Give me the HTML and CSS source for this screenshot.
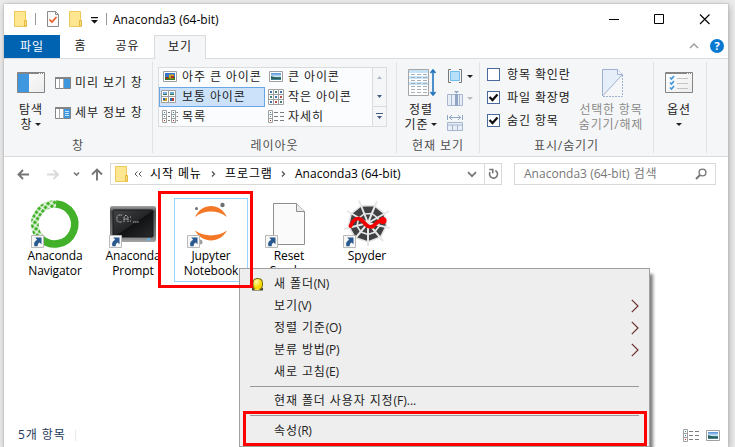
FILE: index.html
```html
<!DOCTYPE html>
<html lang="ko">
<head>
<meta charset="utf-8">
<title>Anaconda3 (64-bit)</title>
<link rel="stylesheet" href="styles.css">
</head>
<body>
<svg class="defs" width="0" height="0" aria-hidden="true">
  <defs>
    <linearGradient id="sky" x1="0" y1="0" x2="0" y2="1"><stop offset="0" stop-color="#4f8fd8"/><stop offset=".5" stop-color="#cfe6f7"/><stop offset=".6" stop-color="#3d7b71"/><stop offset="1" stop-color="#4d80a5"/></linearGradient>
    <linearGradient id="cmd" x1="0" y1="0" x2="1" y2="1"><stop offset="0" stop-color="#414243"/><stop offset=".5" stop-color="#252627"/><stop offset=".52" stop-color="#111213"/><stop offset="1" stop-color="#292a2b"/></linearGradient>
    <linearGradient id="frame" x1="0" y1="0" x2="0" y2="1"><stop offset="0" stop-color="#a7a7a7"/><stop offset=".15" stop-color="#4f5051"/><stop offset=".82" stop-color="#77797b"/><stop offset="1" stop-color="#a4a6a8"/></linearGradient>
    <linearGradient id="pane" x1="0" y1="0" x2="1" y2="1"><stop offset="0" stop-color="#fff"/><stop offset="1" stop-color="#ececec"/></linearGradient>
    <radialGradient id="egg" cx=".35" cy=".3"><stop offset="0" stop-color="#fffbb0"/><stop offset="1" stop-color="#f4d800"/></radialGradient>
    <pattern id="scales" width="4.600" height="4.600" patternUnits="userSpaceOnUse" patternTransform="rotate(35)"><path d="M.6.6h3.400v3.400H.6z" fill="#43b02a"/></pattern>
    <symbol id="folder" viewBox="0 0 13 16"><path d="M.5.5h11v9h1v6h-12z" fill="#ffe690" stroke="#edc95c"/><path d="M10.500 15V9.500h2V15z" fill="#fbe08a" stroke="#e5b93d"/></symbol>
    <symbol id="list" viewBox="0 0 16 13"><path d="M.5.5h4v12h-4zM.5 4.500h4M.5 8.500h4" fill="#fff" stroke="#a0a0a0"/><path d="M2 2h1v1H2zM2 6h1v1H2z" fill="#3c82a8"/><path d="M2 10h1v1H2z" fill="#c22"/><path d="M6 2.500h4m2 0h4M6 6.500h4m2 0h4M6 10.500h4m2 0h4" stroke="#7d7d7d"/></symbol>
    <symbol id="photo" viewBox="0 0 14 11"><path d="M.5.5h13v10H.5z" fill="#fff" stroke="#a0a0a0"/><path d="M2 2h10v7H2z" fill="url(#sky)"/><path d="M2 5l3 1 3 1h4v1H2z" fill="#28635b"/></symbol>
    <symbol id="shortcut" viewBox="0 0 13 13"><path d="M.5.5h12v12H.5z" fill="#f7f7f7" stroke="#b9b9b9"/><path d="M4.300 2.500H10.500v6.700L8.700 7.400C6.900 8.200 6.700 9.300 6.700 11.200H3.400C2.500 8.200 3.600 6.200 6.100 4.800z" fill="#29598f"/></symbol>
    <symbol id="chev" viewBox="0 0 8 14"><path d="M.8.8L7 7 .8 13.200" fill="none" stroke="#6b3030" stroke-width="1.200"/></symbol>
  </defs>
</svg>
<div class="window">
  <header class="titlebar">
    <svg class="folder" width="13" height="16"><use href="#folder"/></svg>
    <i class="vline v1"></i>
    <svg class="props" width="12" height="16" viewBox="0 0 12 16"><path d="M.5.5h8l3 3v12H.5z" fill="#fafafa" stroke="#8b8b8b"/><path d="M8.500.5v3h3" fill="none" stroke="#8b8b8b"/><path d="M2.500 8.500l2.500 2.500 4.500-5" fill="none" stroke="#ee5a24" stroke-width="1.700"/></svg>
    <svg class="folder f2" width="13" height="16"><use href="#folder"/></svg>
    <svg class="qat" width="7" height="7" viewBox="0 0 7 7"><path d="M0 0h7v1.200H0zM0 3h7L3.500 6.500z" fill="#111"/></svg>
    <i class="vline v2"></i>
    <span class="title">Anaconda3 (64-bit)</span>
    <svg class="controls" width="102" height="11" viewBox="0 0 102 11"><path d="M0 5.500h10M45.500.5h9v9h-9z" fill="none" stroke="#000"/><path d="M91 .5l9.500 9.500M100.500.5L91 10" fill="none" stroke="#000" stroke-width="1.100"/></svg>
  </header>
  <nav class="tabs">
    <span class="tab file">파일</span><span class="tab home">홈</span><span class="tab share">공유</span><span class="tab view">보기</span>
    <svg class="collapse" width="10" height="6" viewBox="0 0 10 6"><path d="M1 5l4-4 4 4" fill="none" stroke="#999" stroke-width="1.400"/></svg>
    <span class="help">?</span>
  </nav>

  <section class="ribbon">
    <div class="group g-pane">
      <div class="body">
        <div class="big nav">
          <svg width="28" height="21" viewBox="0 0 28 21"><path d="M.5.5h27v20H.5z" fill="url(#pane)" stroke="#858585"/><path d="M1 1h26v1H1z" fill="#858585"/><path d="M22 1h1v1h-1zm2 0h1v1h-1zm2 0h1v1h-1z" fill="#fff"/><path d="M1 2h11v18H1z" fill="#3f97df"/></svg>
          <span class="l1">탐색</span><span class="l2">창<b class="tri"></b></span>
        </div>
        <div class="stack">
          <div class="cmd"><svg width="16" height="12" viewBox="0 0 16 12"><path d="M.5.5h15v11H.5z" fill="#fff" stroke="#858585"/><path d="M0 0h16v2H0z" fill="#858585"/><path d="M4.500 2v9.500M8.500 2v9.500" stroke="#aaa"/><path d="M9 2h6v9H9z" fill="#3f97df"/></svg><span>미리 보기 창</span></div>
          <div class="cmd"><svg width="16" height="12" viewBox="0 0 16 12"><path d="M.5.5h15v11H.5z" fill="#fff" stroke="#858585"/><path d="M0 0h16v2H0z" fill="#858585"/><path d="M4.500 2v9.500M8.500 2v9.500" stroke="#aaa"/><path d="M9 2h6v9H9z" fill="#3f97df"/><path d="M10 4.500h4M10 6.500h4M10 8.500h4" stroke="#c4e4fa"/></svg><span>세부 정보 창</span></div>
        </div>
      </div>
      <div class="caption">창</div>
    </div>

    <div class="group g-layout">
      <div class="body">
        <div class="gallery">
          <div class="choice"><svg width="14" height="11" viewBox="0 0 14 11"><path d="M.5.5h13v10H.5z" fill="#fff" stroke="#a0a0a0"/><path d="M2 2h10v7H2z" fill="#3474cb"/><path d="M2 6h10v3H2z" fill="#39752b"/><path d="M6 3.500h5v4H6z" fill="#d5a717"/><path d="M8 5h3v2H8zM3 6h2v2H3z" fill="#a52828"/></svg><span>아주 큰 아이콘</span></div>
          <div class="choice"><svg width="14" height="11"><use href="#photo"/></svg><span>큰 아이콘</span></div>
          <div class="choice selected"><svg width="15" height="13" viewBox="0 0 15 13"><path d="M.5.5h14v12H.5zM7.500.5v12M.5 6.500h14" fill="#fff" stroke="#a0a0a0"/><path d="M2 2h4v3H2z" fill="#75ace2"/><path d="M9 2h4v3H9z" fill="#66aeca"/><path d="M2 4h4v1H2zM9 4h4v1H9z" fill="#35785e"/><path d="M2 8h4v3H2z" fill="#c99c24"/><path d="M2 8h2v2H2zM9 8h2v3H9z" fill="#306aaf"/><path d="M11 8h2v3h-2z" fill="#b14033"/></svg><span>보통 아이콘</span></div>
          <div class="choice"><svg class="nine" width="16" height="16" viewBox="0 0 16 16"><path d="M.5.5h15v15H.5zM5.500.5v15M10.500.5v15M.5 5.500h15M.5 10.500h15" fill="#fff" stroke="#a0a0a0"/><path d="M2 2h2v2H2zM12 2h2v2h-2zM7 7h2v2H7zM2 12h2v2H2z" fill="#3973a8"/><path d="M7 2h2v2H7zM2 7h2v2H2zM12 12h2v2h-2z" fill="#3c8470"/><path d="M12 7h2v2h-2zM7 12h2v2H7z" fill="#b44f3f"/></svg><span>작은 아이콘</span></div>
          <div class="choice"><svg width="16" height="13" viewBox="0 0 16 13"><path d="M.5.5h4v12h-4zM.5 4.500h4M.5 8.500h4M9.500.5h4v12h-4zM9.500 4.500h4M9.500 8.500h4" fill="#fff" stroke="#a0a0a0"/><path d="M2 2h1v1H2zM2 6h1v1H2zM11 2h1v1h-1zM11 6h1v1h-1z" fill="#3c82a8"/><path d="M2 10h1v1H2zM11 10h1v1h-1z" fill="#c22"/><path d="M6 2.500h2M6 6.500h2M6 10.500h2M14.500 2.500H16M14.500 6.500H16M14.500 10.500H16" stroke="#7d7d7d"/></svg><span>목록</span></div>
          <div class="choice"><svg width="16" height="13"><use href="#list"/></svg><span>자세히</span></div>
        </div>
        <div class="scroller">
          <span><svg width="5" height="3" viewBox="0 0 5 3"><path d="M0 3h5L2.500 0z" fill="#a9b5c7"/></svg></span>
          <span><svg width="5" height="3" viewBox="0 0 5 3"><path d="M0 0h5L2.500 3z" fill="#435a82"/></svg></span>
          <span><svg width="7" height="6" viewBox="0 0 7 6"><path d="M0 0h7v1H0zM1 3h5L3.500 6z" fill="#435a82"/></svg></span>
        </div>
      </div>
      <div class="caption">레이아웃</div>
    </div>

    <div class="group g-current">
      <div class="body">
        <div class="big sort">
          <svg width="28" height="28" viewBox="0 0 28 28"><path d="M.5.5h20v26H.5z" fill="#fff" stroke="#a5a5a5"/><path d="M1 1h19v3H1zM1 7h19v3H1zM1 13h19v3H1z" fill="#c5e2f7"/><path d="M3 5.500h4m2 0h4m2 0h4M3 8.500h4m2 0h4m2 0h4M3 11.500h4m2 0h4m2 0h4M3 14.500h4m2 0h4m2 0h4M3 17.500h4m2 0h4m2 0h4M3 20.500h4m2 0h4m2 0h4M3 23.500h4m2 0h4m2 0h4" stroke="#a9b0b5"/><path d="M25 1v25M22.500 4L25 1l2.500 3M22.500 23l2.500 3 2.500-3" fill="none" stroke="#2475bd" stroke-width="1.600"/></svg>
          <span class="l1">정렬</span><span class="l2">기준<b class="tri"></b></span>
        </div>
        <div class="minis">
          <div><svg width="16" height="14" viewBox="0 0 16 14"><path d="M4 .5H1.500v13H4M12 .5h2.500v13H12" fill="none" stroke="#777"/><path d="M3.500 2.500h9v9h-9z" fill="#b9e0fb" stroke="#71bdf0"/></svg><b class="tri"></b></div>
          <div class="off"><svg width="16" height="15" viewBox="0 0 16 15"><path d="M.5 3.500h15v11H.5zM4.500 3.500v11M12.500 3.500v11" fill="#e8eef8" stroke="#a7b6ce"/><path d="M8 3h3v12H8zM7 0h5L9.500 2.500z" fill="#8fa3c2"/></svg><b class="tri"></b></div>
          <div class="off"><svg width="16" height="17" viewBox="0 0 16 17"><path d="M.5 1v5M15.500 1v5M2 3.500h12M5 1L2.500 3.500 5 6M11 1l2.500 2.500L11 6" fill="none" stroke="#91a5c4"/><path d="M.5 8.500h15v8H.5zM5.500 11v5.500M10.500 11v5.500M.5 11h15" fill="#e8eef8" stroke="#a7b6ce"/></svg></div>
        </div>
      </div>
      <div class="caption">현재 보기</div>
    </div>

    <div class="group g-show">
      <div class="body">
        <div class="checks">
          <label><i class="box"></i>항목 확인란</label>
          <label><i class="box"><svg width="11" height="11" viewBox="0 0 11 11"><path d="M1.500 5l3 3L9.500 2.500" fill="none" stroke="#111" stroke-width="2.300"/></svg></i>파일 확장명</label>
          <label><i class="box"><svg width="11" height="11" viewBox="0 0 11 11"><path d="M1.500 5l3 3L9.500 2.500" fill="none" stroke="#111" stroke-width="2.300"/></svg></i>숨긴 항목</label>
        </div>
        <div class="big hide">
          <svg width="21" height="28" viewBox="0 0 21 28"><path d="M.5 27V.5h15l5 5L.5 27" fill="#e6eefa" stroke="#9fb1ce"/><path d="M15.500.5v5h5" fill="#f4f8fd" stroke="#9fb1ce"/><path d="M20.500 6v21.500H.5" fill="none" stroke="#9fb1ce" stroke-dasharray="2 1"/></svg>
          <span class="l1">선택한 항목</span><span class="l2">숨기기/해제</span>
        </div>
      </div>
      <div class="caption">표시/숨기기</div>
    </div>

    <div class="group g-opt">
      <div class="big nav">
        <svg width="28" height="21" viewBox="0 0 28 21"><path d="M.5.5h27v20H.5z" fill="url(#pane)" stroke="#858585"/><path d="M1 1h26v1H1z" fill="#858585"/><path d="M22 1h1v1h-1zm2 0h1v1h-1zm2 0h1v1h-1z" fill="#fff"/><path d="M5 5.500l1.500 1.500L9 4M5 10.500l1.500 1.500L9 9M5 15.500L6.500 17 9 14" fill="none" stroke="#3f97df" stroke-width="1.600"/><path d="M12 6.500h11M12 11.500h11M12 16.500h11" stroke="#c3c3c3"/></svg>
        <span class="l1">옵션</span><span class="l2"><b class="tri"></b></span>
      </div>
    </div>
  </section>

  <div class="addressbar">
    <svg class="history" width="86" height="13" viewBox="0 0 86 13"><g fill="none" stroke-width="1.900"><path d="M12 6.500H1.500M6 2L1.500 6.500 6 11" stroke="#757575"/><path d="M30 6.500h10.500M36.500 2L41 6.500 36.500 11" stroke="#dadada"/><path d="M57 4.500L59.500 7l2.500-2.500" stroke="#757575" stroke-width="1.600"/><path d="M80 12.500V2M75 6.500l5-5 5 5" stroke="#757575"/></g></svg>
    <div class="path">
      <svg width="13" height="16"><use href="#folder"/></svg>
      <svg class="dbl" width="8" height="6" viewBox="0 0 8 6"><path d="M3.500.5L1 3l2.500 2.500M7.500.5L5 3l2.500 2.500" fill="none" stroke="#555"/></svg>
      <span class="p1">시작 메뉴</span>
      <svg class="gt" width="5" height="6" viewBox="0 0 5 6"><path d="M1 .5L3.500 3 1 5.500" fill="none" stroke="#555" stroke-width="1.300"/></svg>
      <span class="p2">프로그램</span>
      <svg class="gt" width="5" height="6" viewBox="0 0 5 6"><path d="M1 .5L3.500 3 1 5.500" fill="none" stroke="#555" stroke-width="1.300"/></svg>
      <span class="lat">Anaconda3 (64-bit)</span>
      <svg class="drop" width="10" height="7" viewBox="0 0 10 7"><path d="M1 1.200l4 4 4-4" fill="none" stroke="#777" stroke-width="1.800"/></svg>
      <span class="refresh"><svg width="11" height="12" viewBox="0 0 11 12"><path d="M7.300 2.500A4 4 0 1 1 2 4.200M1.200 1.500h3.600v3.700" fill="none" stroke="#777" stroke-width="1.600"/></svg></span>
    </div>
    <div class="search"><span><span class="lat">Anaconda3 (64-bit)</span> 검색</span><svg width="12" height="12" viewBox="0 0 12 12"><circle cx="7.500" cy="4.500" r="3.400" fill="none" stroke="#777" stroke-width="1.400"/><path d="M5 7L1 11" stroke="#777" stroke-width="1.900"/></svg></div>
  </div>

  <main class="files">
    <div class="item">
      <svg class="art" width="48" height="48" viewBox="0 0 48 48"><path d="M25 4A20 20 0 1 1 10 38.500" fill="none" stroke="#43b02a" stroke-width="7.600"/><path d="M25 4A20 20 0 0 0 10 38.500" fill="none" stroke="url(#scales)" stroke-width="7.600"/><use href="#shortcut" x="0" y="35" width="13" height="13"/></svg>
      <span>Anaconda<br>Navigator</span>
    </div>
    <div class="item">
      <svg class="art" width="48" height="48" viewBox="0 0 48 48"><rect x="1" y="6" width="46" height="36" rx="2" fill="url(#frame)"/><rect x="4" y="10" width="40" height="27" rx="1" fill="url(#cmd)" stroke="#17191a"/><path d="M13 15h-3.500L8 16.500v4L9.500 22H13M15 22v-5l2-2 2 2v5M15 19h4M24 22h6M21 17h1M21 21h1" fill="none" stroke="#b9bcbe" stroke-width="1" stroke-dasharray="1.500 .6"/><path d="M38 38.500h3v2h-3z" fill="#5db7f4"/><use href="#shortcut" x="0" y="35" width="13" height="13"/></svg>
      <span>Anaconda<br>Prompt</span>
    </div>
    <div class="item current">
      <svg class="art" width="48" height="48" viewBox="0 0 48 48"><path d="M8 17C15 2.300 33 2.300 40 17 30 9.800 18 9.800 8 17zM8 30.500c7 13.200 25 13.200 32 0-10 6.500-22 6.500-32 0z" fill="#f37726"/><circle cx="35.500" cy="5" r="2.200" fill="#6e6f71"/><circle cx="9.500" cy="8.500" r="1.500" fill="#6e6f71"/><circle cx="13" cy="42" r="2.500" fill="#9e9e9e"/><use href="#shortcut" x="0" y="35" width="13" height="13"/></svg>
      <span>Jupyter<br>Notebook</span>
    </div>
    <div class="item">
      <svg class="art" width="48" height="48" viewBox="0 0 48 48"><path d="M8.500 3.500h23l8 8v33h-31z" fill="#fafafa" stroke="#8f8f8f"/><path d="M31.500 3.500v8h8" fill="#eaeaea" stroke="#8f8f8f"/><use href="#shortcut" x="0" y="35" width="13" height="13"/></svg>
      <span>Reset<br>Spyder</span>
    </div>
    <div class="item">
      <svg class="art" width="48" height="48" viewBox="0 0 48 48"><path d="M18 6l13-.5 10 8 2.500 12-6 11.500L25 42l-13-4.500L5.500 26 8 14z" fill="#404143" stroke="#e4e4e4" stroke-width="1.600"/><path d="M25 23L16 .5M25 23L34 1M25 23L46 11M25 23l22 5M25 23l15 18M25 23v23M25 23L10 41M25 23L1 29M25 23L4 11" fill="none" stroke="#e7e7e7" stroke-width="2"/><path d="M21 14l8-.5 6 5 1 8-5 6-6 2-7-2.500-4-6 1.500-7.500z" fill="none" stroke="#e7e7e7" stroke-width="1.600"/><path d="M7.500 26c4-9 9-9 13-4s8 7 12 2c3-3 5-4 8-4" fill="none" stroke="#f00000" stroke-width="3.800" stroke-linecap="round"/><circle cx="40" cy="20.500" r="3.600" fill="#f00"/><use href="#shortcut" x="0" y="35" width="13" height="13"/></svg>
      <span>Spyder</span>
    </div>
  </main>

  <footer class="status">
    <span class="count">5개 항목</span><i></i>
    <svg class="details" width="16" height="13"><use href="#list"/></svg>
    <svg width="14" height="11"><use href="#photo"/></svg>
  </footer>
</div>

<div class="menu">
  <div class="entry"><svg class="bulb" width="13" height="13" viewBox="0 0 13 13"><path d="M1 10h11v2.500H1z" fill="#4a4a2c"/><rect x="2" y=".5" width="9.500" height="11" rx="4" fill="url(#egg)" stroke="#68601c"/><path d="M3 10.500h6l-1 1.500H4z" fill="#f6e428"/></svg><span>새 폴더<em>(N)</em></span></div>
  <div class="entry"><span>보기<em>(V)</em></span><svg width="8" height="14"><use href="#chev"/></svg></div>
  <div class="entry"><span>정렬 기준<em>(O)</em></span><svg width="8" height="14"><use href="#chev"/></svg></div>
  <div class="entry"><span>분류 방법<em>(P)</em></span><svg width="8" height="14"><use href="#chev"/></svg></div>
  <div class="entry"><span>새로 고침<em>(E)</em></span></div>
  <hr>
  <div class="entry"><span>현재 폴더 사용자 지정<em class="dots">(F)...</em></span></div>
  <hr>
  <div class="entry last"><span>속성<em>(R)</em></span></div>
</div>
<div class="mark mark-file"></div>
<div class="mark mark-menu"></div>
</body>
</html>
```
FILE: styles.css
```css
* { box-sizing: border-box; }
body {
  margin: 0;
  width: 735px;
  height: 447px;
  overflow: hidden;
  position: relative;
  background: #ececec;
  color: #222;
  font: 12px/16px "Open Sans", "Noto Sans CJK KR", sans-serif;
  letter-spacing: .9px;
}
svg { display: block; flex: none; overflow: visible; }
.defs { position: absolute; }
span { white-space: nowrap; }
.window {
  margin: 4px 7px 0 4px;
  height: 443px;
  background: #fff;
  display: flex;
  flex-direction: column;
  box-shadow: 0 0 0 .5px #bbb, 1px 2px 7px rgba(0, 0, 0, .3);
}

/* Title bar */
.titlebar { height: 31px; display: flex; align-items: center; padding-left: 10px; }
.vline { width: 1px; height: 12px; background: #999; }
.v1 { margin: 0 11px 0 8px; }
.f2 { margin-left: 10px; }
.qat { margin: 3px 8px 0 9px; }
.v2 { margin-right: 6px; }
.title { letter-spacing: .02px; padding-top: 2px; color: #000; }
.controls { margin-left: auto; margin-right: 17px; }

/* Tabs */
.tabs { height: 24px; display: flex; align-items: center; border-bottom: 1px solid #dadbdc; }
.tab { height: 24px; line-height: 24px; text-align: center; }
.file { width: 56px; height: 23px; background: #0063b1; color: #fff; }
.home { width: 41px; }
.share { width: 53px; }
.view { width: 52px; margin-bottom: -1px; background: #f5f6f7; border: 1px solid #dadbdc; border-bottom: 0; line-height: 22px; }
.collapse { margin-left: auto; }
.help {
  width: 14px; height: 14px; margin: 0 4px 0 11px;
  border-radius: 50%; background: #0879d0; color: #fff;
  font-weight: 700; font-size: 11px; line-height: 14px; text-align: center; letter-spacing: 0;
}

/* Ribbon */
.ribbon { height: 98px; padding: 3px 0; display: flex; background: #f5f6f7; border-bottom: 1px solid #dadbdc; }
.group { height: 91px; border-right: 1px solid #e1e2e3; display: flex; flex-direction: column; }
.body { display: flex; height: 75px; }
.caption { height: 16px; line-height: 18px; text-align: center; color: #505050; }
.g-pane { width: 149px; }
.g-layout { width: 244px; }
.g-current { width: 83px; }
.g-show { width: 174px; }
.g-opt { width: 53px; }
.big { display: flex; flex-direction: column; align-items: center; }
.big .l1, .big .l2 { height: 15px; line-height: 15px; }
.big .l2 { display: flex; align-items: center; }
.tri { border: 3px solid transparent; border-top-color: #222; border-bottom: 0; margin-left: 3px; }
.nav { width: 54px; padding-top: 10px; }
.g-opt .nav { width: 50px; }
.nav .l1 { margin-top: 9px; }
.g-opt .tri { margin: 0; }
.stack { padding-top: 13px; display: flex; flex-direction: column; gap: 14px; margin-left: -3px; }
.cmd { height: 16px; display: flex; align-items: center; gap: 4px; }
.gallery {
  margin: 5px 0 0 5px; width: 215px; height: 60px;
  display: grid; grid-template: repeat(3, 20px) / 107px 1fr;
  background: #fbfcfd; box-shadow: inset 0 0 0 1px #dadbdc;
}
.choice { display: grid; grid-template-columns: 20px auto; align-items: center; justify-content: start; padding-left: 3px; line-height: 18px; }
.choice:nth-child(odd) { margin-left: 1px; }
.choice:nth-child(1) svg, .choice:nth-child(2) svg { margin-left: 1px; }
.selected { background: #cce2fa; box-shadow: inset 0 0 0 1px #68a6e6; }
.selected svg { margin-left: -1px; }
.scroller { width: 15px; height: 60px; margin: 5px 0 0 -1px; border: 1px solid #dadbdc; display: grid; grid-template-rows: 19px 19px 20px; }
.scroller span { display: grid; place-items: center; }
.scroller span:last-child { border-top: 1px solid #dadbdc; }
.sort { width: 48px; padding-top: 7px; }
.sort svg { margin-left: 2px; }
.sort .l1 { margin-top: 5px; }
.minis { display: flex; flex-direction: column; padding: 7px 0 0 2px; }
.minis > div { height: 22px; display: flex; gap: 3px; align-items: flex-start; }
.minis .tri { margin: 6px 0 0 1px; }
.minis .off { height: 23px; }
.off .tri { border-top-color: #bbb; }
.checks { width: 94px; padding: 5px 0 0 7px; display: flex; flex-direction: column; gap: 7px; }
.checks label { height: 16px; display: flex; align-items: center; gap: 7px; white-space: nowrap; }
.box { width: 13px; height: 13px; flex: none; background: #fff; border: 1px solid #496b9b; }
.hide { width: 76px; padding-top: 7px; color: #8a8a8a; }
.hide .l1, .hide .l2 { margin-left: -2px; letter-spacing: .8px; }
.hide .l1 { margin-top: 5px; }

/* Navigation row */
.addressbar { height: 34px; display: flex; align-items: center; padding: 1px 12px 0 13px; color: #000; }
.path { margin-left: 7px; width: 392px; height: 22px; border: 1px solid #d9d9d9; display: flex; align-items: center; padding-left: 4px; }
.dbl { margin: 0 8px 0 6px; }
.p1 { width: 54px; }
.p1 + .gt { margin: 0 9px 0 7px; }
.p2 { width: 50px; }
.p2 + .gt { margin: 0 9px 0 6px; }
.lat { letter-spacing: .02px; }
.drop { margin-left: auto; }
.refresh { margin-left: 7px; border-left: 1px solid #d9d9d9; width: 17px; height: 20px; display: grid; place-items: center; }
.search { margin-left: 12px; width: 202px; height: 22px; border: 1px solid #d9d9d9; display: flex; align-items: center; justify-content: space-between; padding: 0 8px 0 9px; color: #777; }

/* Files */
.files { display: flex; gap: 4px; padding: 7px 0 0 14px; height: 233px; }
.item { width: 74px; height: 84px; padding-top: 2px; display: flex; flex-direction: column; align-items: center; text-align: center; line-height: 15.500px; letter-spacing: -.1px; color: #000; }
.item.current { border: 1px solid #99d1ff; padding-top: 1px; }
.status { height: 24px; display: flex; align-items: center; padding: 0 8px 0 14px; color: #1e395b; }
.status i { width: 1px; height: 11px; margin-left: 9px; background: #e9e9e9; }
.details { margin-left: auto; margin-right: 7px; }

/* Context menu */
.menu {
  position: absolute; left: 239px; top: 268px; width: 411px; height: 179px;
  padding: 4px 10px 0 10px; background: #eee; border: 1px solid #a0a0a0; color: #222;
  box-shadow: 4px 5px 3px -1px rgba(0, 0, 0, .5);
}
.entry { height: 22px; display: flex; align-items: center; justify-content: space-between; padding: 0 0 0 24px; }
.bulb { margin-left: -23px; }
.entry:first-child { justify-content: flex-start; gap: 10px; }
.entry em { font-style: normal; letter-spacing: -.3px; }
.entry .dots { letter-spacing: 0; }
.menu hr { border: 0; height: 1px; margin: 3px 0 3px; background: #999; }
.menu .last { padding-top: 2px; }

/* Highlight frames */
.mark { position: absolute; border: 3px solid #f00; }
.mark-file { left: 158px; top: 191px; width: 95px; height: 97px; }
.mark-menu { left: 243px; top: 411px; width: 404px; height: 35px; }
```
